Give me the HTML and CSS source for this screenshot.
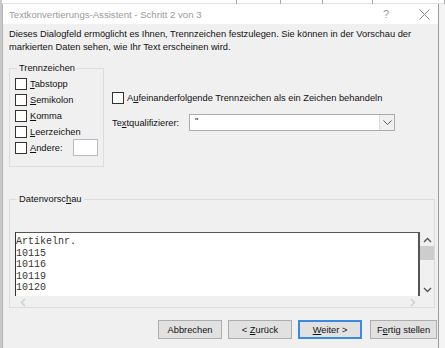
FILE: index.html
```html
<!DOCTYPE html>
<html lang="de">
<head>
    <meta charset="UTF-8">
    <title>Textkonvertierungs-Assistent</title>
    <link rel="stylesheet" href="styles.css">
</head>
<body>

    <!-- Excel sheet peeking out behind the dialog -->
    <div class="sheet">
        <span class="cell c1"></span>
        <span class="cell c2"></span>
        <span class="cell c3"></span>
        <span class="cell c4"></span>
        <span class="cell c5"></span>
    </div>

    <div class="dialog">
        <div class="titlebar">
            <span class="title">Textkonvertierungs-Assistent - Schritt 2 von 3</span>
            <span class="help">?</span>
            <svg class="close" width="11" height="11" viewBox="0 0 11 11"><path d="M0.5 0.5 L10.5 10.5 M10.5 0.5 L0.5 10.5" stroke="#888" stroke-width="1"/></svg>
        </div>

        <div class="content">
            <p class="intro">Dieses Dialogfeld ermöglicht es Ihnen, Trennzeichen festzulegen. Sie können in der Vorschau der<br>markierten Daten sehen, wie Ihr Text erscheinen wird.</p>

            <div class="options">
                <fieldset class="group seps">
                    <legend>Trennzeichen</legend>
                    <div class="check"><span class="box"></span><span><u>T</u>abstopp</span></div>
                    <div class="check"><span class="box"></span><span><u>S</u>emikolon</span></div>
                    <div class="check"><span class="box"></span><span><u>K</u>omma</span></div>
                    <div class="check"><span class="box"></span><span><u>L</u>eerzeichen</span></div>
                    <div class="check"><span class="box"></span><span><u>A</u>ndere:</span><span class="field"></span></div>
                </fieldset>

                <div class="side">
                    <div class="check"><span class="box"></span><span>A<u>u</u>feinanderfolgende Trennzeichen als ein Zeichen behandeln</span></div>
                    <div class="qualifier">
                        <span class="qlabel">Te<u>x</u>tqualifizierer:</span>
                        <div class="combo">
                            <span class="value">"</span>
                            <span class="drop">
                                <svg width="9" height="5" viewBox="0 0 9 5"><path d="M0.5 0.5 L4.5 4.5 L8.5 0.5" fill="none" stroke="#555" stroke-width="1"/></svg>
                            </span>
                        </div>
                    </div>
                </div>
            </div>

            <fieldset class="group preview">
                <legend>Datenvorsc<u>h</u>au</legend>
                <div class="view">
                    <div class="list">
                        <div>Artikelnr.</div>
                        <div>10115</div>
                        <div>10116</div>
                        <div>10119</div>
                        <div>10120</div>
                    </div>
                    <div class="vscroll">
                        <svg width="9" height="6" viewBox="0 0 9 6"><path d="M1 5 L4.5 1.5 L8 5" fill="none" stroke="#555" stroke-width="1.4"/></svg>
                        <span class="thumb"></span>
                        <span class="spacer"></span>
                        <svg width="9" height="6" viewBox="0 0 9 6"><path d="M1 1 L4.5 4.5 L8 1" fill="none" stroke="#555" stroke-width="1.4"/></svg>
                    </div>
                </div>
                <div class="hscroll">
                    <svg width="6" height="9" viewBox="0 0 6 9"><path d="M5 1 L1.5 4.5 L5 8" fill="none" stroke="#ccc" stroke-width="1.4"/></svg>
                    <svg width="6" height="9" viewBox="0 0 6 9"><path d="M1 1 L4.5 4.5 L1 8" fill="none" stroke="#ccc" stroke-width="1.4"/></svg>
                </div>
            </fieldset>

            <div class="buttons">
                <button class="btn">Abbrechen</button>
                <button class="btn">&lt; <u>Z</u>urück</button>
                <button class="btn default"><u>W</u>eiter &gt;</button>
                <button class="btn wide">F<u>e</u>rtig stellen</button>
            </div>
        </div>
    </div>

</body>
</html>
```

FILE: styles.css
```css
* { margin: 0; padding: 0; box-sizing: border-box; }

body {
    background: #f4f4f4;
    font-family: 'Liberation Sans', Arial, sans-serif;
    font-size: 9.3px;
    color: #111;
    width: 445px;
    height: 348px;
    overflow: hidden;
    border-left: 2px solid #c8c8c8;
}

u { text-decoration: underline; text-underline-offset: 1px; }

/* Sheet behind the dialog */
.sheet {
    height: 4px;
    display: flex;
    background: #fff;
    border-bottom: 1px solid #e2e2e2;
}

.cell {
    display: block;
    height: 4px;
    border-right: 1px solid #aaa;
}
.c1 { width: 240px; }
.c2 { width: 45px; }
.c3 { width: 43px; }
.c4 { width: 51px; }
.c5 { width: 73px; }

/* Dialog */
.dialog {
    width: 437px;
    height: 344px;
    border-left: 1px solid #b5b5b5;
    border-right: 1px solid #9a9a9a;
    background: #f0f0f0;
}

.titlebar {
    height: 20px;
    background: #fff;
    display: flex;
    align-items: center;
    padding-left: 6px;
    color: #9a9a9a;
    font-size: 9.6px;
}

.title { flex: 1; }

.help {
    font-size: 11px;
    color: #999;
    margin-right: 30px;
}

.close { margin-right: 8px; }

.content {
    padding: 4px 0 0 6px;
}

.intro {
    line-height: 13px;
    height: 26px;
}

.options {
    display: flex;
    margin-top: 8px;
}

.group {
    border: 1px solid #dcdcdc;
    min-width: 0;
}

.group legend {
    padding: 0 2px;
    margin-left: 2px;
    line-height: 12px;
}

.seps {
    width: 95px;
    height: 105px;
    padding: 3px 0 0 5px;
    display: flex;
    flex-direction: column;
    gap: 3px;
}

.check {
    display: flex;
    align-items: center;
    gap: 3px;
    height: 13px;
}

.box {
    width: 12px;
    height: 12px;
    border: 1px solid #333;
    background: #fff;
    flex-shrink: 0;
}

.field {
    width: 25px;
    height: 17px;
    border: 1px solid #bbb;
    background: #fff;
    margin-left: 7px;
}

.side {
    margin-left: 8px;
    padding-top: 29px;
    display: flex;
    flex-direction: column;
    gap: 10px;
}

.qualifier {
    display: flex;
    align-items: center;
}

.qlabel { width: 77px; }

.combo {
    width: 206px;
    height: 17px;
    border: 1px solid #ababab;
    background: #fff;
    display: flex;
}

.value {
    flex: 1;
    padding-left: 5px;
    line-height: 12px;
}

.drop {
    width: 15px;
    border-left: 1px solid #d9d9d9;
    background: #f0f0f0;
    display: flex;
    align-items: center;
    justify-content: center;
}

/* Preview */
.preview {
    width: 426px;
    height: 115px;
    margin-top: 26px;
    padding: 27px 0 0 5px;
}

.view {
    display: flex;
    height: 64px;
}

.list {
    width: 406px;
    background: #fff;
    border-top: 1px solid #555;
    border-left: 1px solid #333;
    border-right: 2px solid #555;
    font-family: 'Liberation Mono', 'Courier New', monospace;
    font-size: 10px;
    line-height: 11.6px;
    color: #3a3530;
    padding-top: 3px;
    overflow: hidden;
}

.vscroll {
    width: 14px;
    display: flex;
    flex-direction: column;
    align-items: center;
    padding: 5px 0 3px;
}

.thumb {
    width: 14px;
    height: 14px;
    background: #cdcdcd;
    margin-top: 3px;
}

.spacer { flex: 1; }

.hscroll {
    width: 406px;
    height: 13px;
    display: flex;
    justify-content: space-between;
    align-items: center;
    padding: 0 5px;
}

/* Buttons */
.buttons {
    display: flex;
    justify-content: flex-end;
    gap: 6px;
    margin-top: 12px;
    padding-right: 1px;
}

.btn {
    width: 64px;
    height: 19px;
    border: 1px solid #adadad;
    background: #e1e1e1;
    font-family: 'Liberation Sans', Arial, sans-serif;
    font-size: 9.3px;
    color: #111;
}

.btn.default {
    border: 2px solid #3c8ae0;
}

.btn.wide { width: 67px; margin-left: 2px; }
```
